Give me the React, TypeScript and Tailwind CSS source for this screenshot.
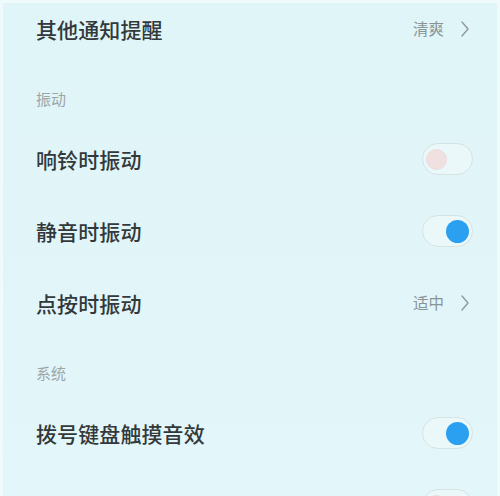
import React from "react";

const font = { fontFamily: '"Noto Sans CJK SC", "Noto Sans", sans-serif' };

function Chevron() {
  return (
    <svg width="10" height="18" viewBox="0 0 10 18" className="ml-[16px] mr-[3px]">
      <polyline points="2,2 8,9 2,16" fill="none" stroke="#8f9a9c" strokeWidth="1.4" strokeLinecap="round" strokeLinejoin="round" />
    </svg>
  );
}

function Toggle({ on }: { on: boolean }) {
  return (
    <div className="w-[51px] h-[32px] rounded-full border-[1.5px] border-[#d6e3e5] bg-[#eaf8fa] flex items-center px-[2px]">
      {on ? (
        <div className="ml-auto mr-[1px] w-[23px] h-[23px] rounded-full bg-[#2b9ff0]" />
      ) : (
        <div className="ml-[1px] w-[21px] h-[21px] rounded-full bg-[#f0e0e0] border border-[#eadcdc]" />
      )}
    </div>
  );
}

function Row({ label, value, toggle, first }: { label: string; value?: string; toggle?: boolean; first?: boolean }) {
  return (
    <div className={`flex items-center pl-[33px] pr-[24px] ${first ? "h-[62px] pb-[10px]" : "h-[72px]"}`}>
      <span className="text-[21px] text-[#33393b] font-medium tracking-[0.1px] leading-none">{label}</span>
      <div className="ml-auto flex items-center">
        {value !== undefined ? (
          <>
            <span className="text-[15.5px] text-[#8a9496] leading-none">{value}</span>
            <Chevron />
          </>
        ) : (
          <Toggle on={!!toggle} />
        )}
      </div>
    </div>
  );
}

function Header({ text }: { text: string }) {
  return (
    <div className="h-[58px] pl-[33px] pt-[24px]">
      <span className="text-[15px] text-[#9ba6a8] leading-[20px] block">{text}</span>
    </div>
  );
}

export default function App() {
  return (
    <div style={font} className="w-[500px] h-[496px] overflow-hidden bg-gradient-to-b from-[#e0f5f8] to-[#e3f6fa] border-x-[3px] border-t-[3px] border-[#eefafc]">
      <Row first label="其他通知提醒" value="清爽" />
      <Header text="振动" />
      <Row label="响铃时振动" toggle={false} />
      <Row label="静音时振动" toggle={true} />
      <Row label="点按时振动" value="适中" />
      <Header text="系统" />
      <Row label="拨号键盘触摸音效" toggle={true} />
      <Row label="拨号键盘触摸音效" toggle={false} />
    </div>
  );
}
